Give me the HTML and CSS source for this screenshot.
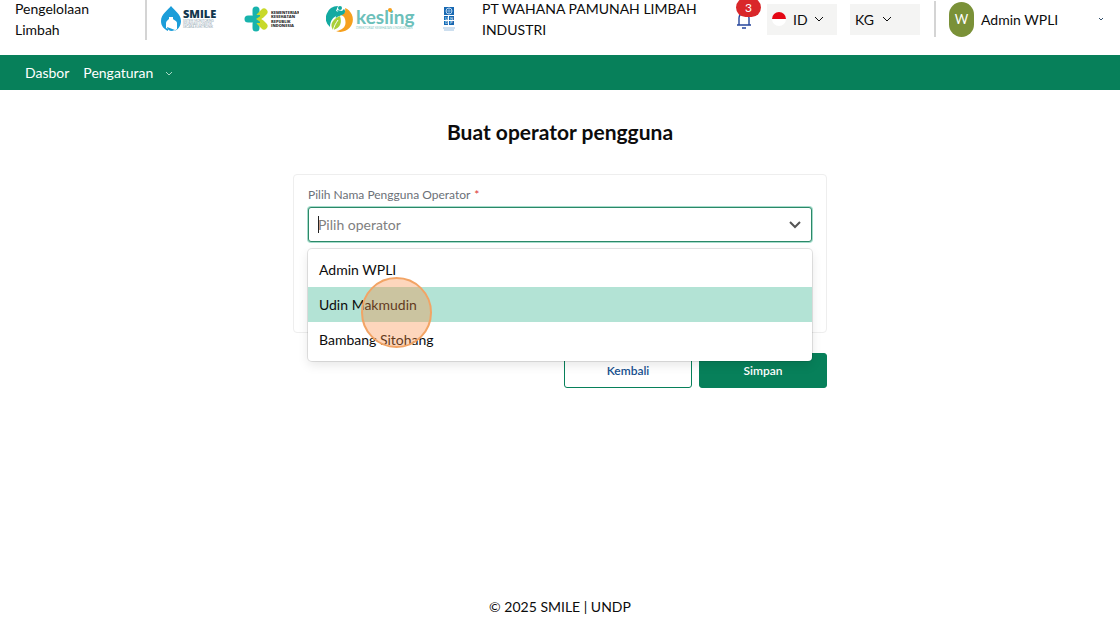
FILE: index.html
```html
<!DOCTYPE html>
<html lang="id">
<head>
  <meta charset="UTF-8" />
  <meta name="viewport" content="width=device-width, initial-scale=1.0" />
  <title>Buat operator pengguna</title>
  <link rel="stylesheet" href="styles.css">
</head>
<body>
  <header class="topbar">
    <div class="app-name">Pengelolaan Limbah</div>
    <div class="logos">
      <svg class="logo" width="57" height="28" viewBox="0 0 57 28" role="img" aria-label="SMILE">
        <path d="M11 1C8 5 1 9 1 16c0 5 3 8 7 10v-2l-2-1v-5c0-2 2-3 3-4v-2h4v2c1 1 4 2 4 4v6l-3 2c4-1 7-5 7-10C21 9 14 5 11 1z" fill="#1b9dd9"/>
        <path d="M7 22l8 3-3 1c-3 0-5-2-5-4z" fill="#1b9dd9"/>
        <text class="smile-word" x="23" y="13" font-size="11">SMILE</text>
        <text class="smile-tag" x="23" y="17" font-size="3">SISTEM MONITORING</text>
        <text class="smile-tag" x="23" y="20" font-size="3">IMUNISASI LOGISTIK</text>
        <text class="smile-tag" x="23" y="23" font-size="3">SECARA ELEKTRONIK</text>
      </svg>
      <svg class="logo" width="55" height="26" viewBox="0 0 55 26" role="img" aria-label="Kementerian Kesehatan Republik Indonesia">
        <g fill="none" stroke-linecap="round" stroke-width="7">
          <path d="M4 13h7" stroke="#18b3ac"/>
          <path d="M12 4v4M12 18v4" stroke="#18b3ac"/>
          <path d="M20 6l-4 4M20 20l-4-4" stroke="#c8d92b"/>
        </g>
        <path d="M10 9h6v8h-6z" fill="#18b3ac"/>
        <path d="M12 13l6-4v8z" fill="#c8d92b"/>
        <path d="M17 13l7-3v6z" fill="#fff"/>
        <g class="kemenkes-word" font-size="4">
          <text x="27" y="8">KEMENTERIAN</text>
          <text x="27" y="12">KESEHATAN</text>
          <text x="27" y="17">REPUBLIK</text>
          <text x="27" y="21">INDONESIA</text>
        </g>
      </svg>
      <svg class="logo" width="90" height="28" viewBox="0 0 90 28" role="img" aria-label="kesling">
        <path d="M12 1A12 12 0 0 0 4 22c0-6 3-10 8-12l4-2-6-2z" fill="#13aaa1"/>
        <path d="M19 3a12 12 0 0 1-9 23c7-1 11-5 9-12-1-3-3-4-5-4 4-1 6-3 5-7z" fill="#f6a01e"/>
        <path d="M11 5l5 1 2-2c2 2 1 5-2 6-2 1-4 1-6 3-1-2 1-4 3-5z" fill="#13aaa1"/>
        <circle cx="14" cy="3" r="2" fill="#13aaa1"/>
        <path d="M14 11c2 6 1 12-7 14-4-6 0-11 7-14z" fill="#a9cf38"/>
        <path d="M7 26c1-5 3-8 5-11" fill="none" stroke="#fff" stroke-width="1"/>
        <text class="kesling-word" x="30" y="19" font-size="19">kesling</text>
        <circle cx="64" cy="5" r="2" fill="#f6a01e"/>
        <text class="kesling-tag" x="30" y="24" font-size="3">DIREKTORAT KESEHATAN LINGKUNGAN</text>
      </svg>
      <svg class="logo" width="12" height="26" viewBox="0 0 12 26" role="img" aria-label="UNDP">
        <path d="M1 1h10v8H1zM1 10h4v4H1zM6 10h5v4H6zM1 15h4v4H1zM6 15h5v4H6z" fill="#1768b2"/>
        <circle cx="6" cy="5" r="3" fill="none" stroke="#b9d5ef"/>
        <path d="M3 5h6M6 2v6" stroke="#b9d5ef" stroke-width=".6"/>
        <g fill="#c4dcf1" font-size="4" font-weight="bold">
          <text x="2" y="14">U</text><text x="7" y="14">N</text>
          <text x="2" y="18">D</text><text x="7" y="18">P</text>
        </g>
        <path d="M0 22h12M1 24h10" stroke="#9bbfe0" stroke-width="1"/>
      </svg>
    </div>
    <div class="company">PT WAHANA PAMUNAH LIMBAH INDUSTRI</div>
    <div class="tools">
      <button class="bell" type="button" aria-label="Notifikasi">
        <svg width="16" height="20" viewBox="0 0 16 20" fill="none" stroke="#26469c" stroke-width="1.4">
          <path d="M1 15h14M3 15V8a5 5 0 0 1 10 0v7M8 3V1M6 18h4"/>
        </svg>
        <span class="badge">3</span>
      </button>
      <div class="picker">
        <svg class="flag" width="14" height="14" viewBox="0 0 14 14"><circle cx="7" cy="7" r="7" fill="#fff"/><path d="M0 7a7 7 0 0 1 14 0z" fill="#e30613"/></svg>
        <select class="lang" aria-label="Bahasa"><option>ID</option><option>EN</option></select>
        <svg class="chevron" width="10" height="6" viewBox="0 0 10 6"><path d="M1 1l4 4 4-4"/></svg>
      </div>
      <div class="picker">
        <select class="unit" aria-label="Satuan"><option>KG</option><option>TON</option></select>
        <svg class="chevron" width="10" height="6" viewBox="0 0 10 6"><path d="M1 1l4 4 4-4"/></svg>
      </div>
    </div>
    <button class="profile" type="button">
      <span class="avatar">W</span>
      <span>Admin WPLI</span>
      <svg class="chevron profile-chevron" width="6" height="5" viewBox="0 0 6 5"><path d="M1 1l2 2 2-2"/></svg>
    </button>
  </header>

  <nav class="menu">
    <a href="#">Dasbor</a>
    <a href="#">Pengaturan <svg class="chevron" width="8" height="6" viewBox="0 0 8 6"><path d="M1 1l3 3 3-3"/></svg></a>
  </nav>

  <main>
    <h1>Buat operator pengguna</h1>
    <form class="operator-form">
      <div class="card">
        <label for="operator">Pilih Nama Pengguna Operator <span class="required">*</span></label>
        <div class="combo">
          <input id="operator" type="text" role="combobox" aria-expanded="true" aria-controls="operatorList" placeholder="Pilih operator" autocomplete="off" />
          <span class="caret"></span>
          <svg class="combo-chevron" width="12" height="8" viewBox="0 0 12 8"><path d="M1 1l5 5 5-5"/></svg>
          <ul id="operatorList" class="options" role="listbox">
            <li role="option">Admin WPLI</li>
            <li role="option" class="active" aria-selected="true">Udin Makmudin</li>
            <li role="option">Bambang Sitohang</li>
          </ul>
          <span class="pointer"></span>
        </div>
      </div>
      <div class="actions">
        <button class="btn" type="button">Kembali</button>
        <button class="btn primary" type="submit">Simpan</button>
      </div>
    </form>
  </main>

  <footer>© 2025 SMILE | UNDP</footer>
</body>
</html>
```
FILE: styles.css
```css
* {
  box-sizing: border-box;
}
body {
  margin: 0;
  min-height: 100vh;
  display: flex;
  flex-direction: column;
  font-family: Lato, sans-serif;
  font-size: 14px;
  line-height: 21px;
  color: #0c0c0c;
  background: #fff;
}
button, input, select {
  font: inherit;
  color: inherit;
}
button {
  cursor: pointer;
}
.topbar {
  display: flex;
  align-items: center;
  height: 55px;
  padding: 0 16px 17px 15px;
  border-left: 1px solid #e6e6e6;
  margin-left: -1px;
}
.app-name {
  width: 132px;
  height: 42px;
  padding-right: 40px;
  border-right: 2px solid #d4d4d4;
  display: flex;
  align-items: center;
}
.logos {
  display: flex;
  align-items: center;
  gap: 27px;
  margin-left: 13px;
}
.logo {
  display: block;
}
.smile-word {
  font-family: "Open Sans", sans-serif;
  font-weight: 800;
  fill: #12364d;
}
.smile-tag {
  fill: #8aa0ad;
}
.kemenkes-word {
  font-family: "Open Sans", sans-serif;
  font-weight: 800;
  fill: #333;
}
.kesling-word {
  fill: #6cc0ba;
  font-weight: bold;
}
.kesling-tag {
  fill: #7fc9c4;
}
.company {
  flex: 1;
  max-width: 232px;
  margin-left: 27px;
}
.tools {
  display: flex;
  align-items: center;
  gap: 13px;
  margin-left: auto;
  padding-right: 14px;
}
.bell {
  position: relative;
  display: flex;
  padding: 2px 0 0;
  border: 0;
  background: none;
}
.badge {
  position: absolute;
  left: 0;
  top: -10px;
  width: 25px;
  height: 19px;
  border-radius: 10px;
  background: #d9272a;
  color: #fff;
  font-size: 12px;
  line-height: 20px;
}
.picker {
  display: flex;
  align-items: center;
  width: 70px;
  height: 31px;
  padding: 0 5px;
  background: #f4f4f3;
}
.bell + .picker {
  margin-left: 2px;
}
.picker select {
  appearance: none;
  border: 0;
  padding: 0;
  background: none;
}
.lang {
  width: 21px;
  margin-left: 7px;
}
.unit {
  width: 27px;
}
.chevron {
  fill: none;
  stroke: currentColor;
}
.profile {
  display: flex;
  align-items: center;
  gap: 7px;
  width: 170px;
  height: 36px;
  padding: 0 0 0 13px;
  border: 0;
  border-left: 2px solid #d4d4d4;
  background: none;
}
.avatar {
  width: 25px;
  height: 35px;
  border-radius: 13px;
  background: #7a9138;
  color: #fff;
  font-size: 13px;
  line-height: 35px;
}
.profile-chevron {
  margin-left: auto;
  color: #33506b;
}
.menu {
  display: flex;
  align-items: center;
  gap: 14px;
  height: 35px;
  padding: 0 25px 1px;
  background: #07805a;
}
.menu a {
  color: #fff;
  text-decoration: none;
}
.menu .chevron {
  margin: 0 0 1px 8px;
  color: #a8d8c6;
}
main {
  flex: 1;
  padding: 28px 16px;
}
h1 {
  margin: 0 0 28px;
  font-size: 21px;
  line-height: 28px;
  text-align: center;
}
.operator-form {
  max-width: 534px;
  margin: 0 auto;
}
.card {
  min-height: 159px;
  padding: 9px 14px;
  border: 1px solid #eee;
  border-radius: 4px;
}
.card label {
  display: block;
  margin-bottom: 2px;
  font-size: 12px;
  color: #6b7078;
}
.required {
  margin-left: 1px;
  color: #dc3535;
}
.combo {
  position: relative;
}
.combo input {
  display: block;
  width: 100%;
  height: 35px;
  padding: 0 40px 0 9px;
  border: 1px solid #2b8868;
  border-radius: 3px;
  outline: none;
  box-shadow: 0 0 0 1px #a5dccb;
}
.combo input::placeholder {
  color: #808080;
}
.caret {
  position: absolute;
  left: 10px;
  top: 9px;
  width: 1px;
  height: 17px;
  background: #222;
}
.combo-chevron {
  position: absolute;
  right: 11px;
  top: 14px;
  fill: none;
  stroke: #555;
  stroke-width: 2;
}
.options {
  position: absolute;
  z-index: 1;
  top: 42px;
  left: 0;
  right: 0;
  margin: 0;
  padding: 3px 0 4px;
  list-style: none;
  background: #fff;
  border-radius: 4px;
  box-shadow: 0 0 0 1px rgba(0, 0, 0, 0.1), 0 4px 11px rgba(0, 0, 0, 0.1);
}
.options li {
  padding: 7px 11px;
}
.options .active {
  background: #b3e3d5;
}
/* click marker over the hovered option */
.pointer {
  position: absolute;
  z-index: 2;
  left: 53px;
  top: 70px;
  width: 71px;
  height: 71px;
  border: 2px solid #f2a465;
  border-radius: 50%;
  background: rgba(249, 138, 62, 0.35);
}
.actions {
  display: flex;
  justify-content: flex-end;
  gap: 7px;
  margin-top: 20px;
}
.btn {
  width: 128px;
  height: 35px;
  border: 1px solid #07805a;
  border-radius: 3px;
  background: #fff;
  color: #17518f;
  font-size: 12px;
  font-weight: 600;
}
.primary {
  background: #07805a;
  color: #fff;
}
footer {
  padding-bottom: 10px;
  text-align: center;
}
```
